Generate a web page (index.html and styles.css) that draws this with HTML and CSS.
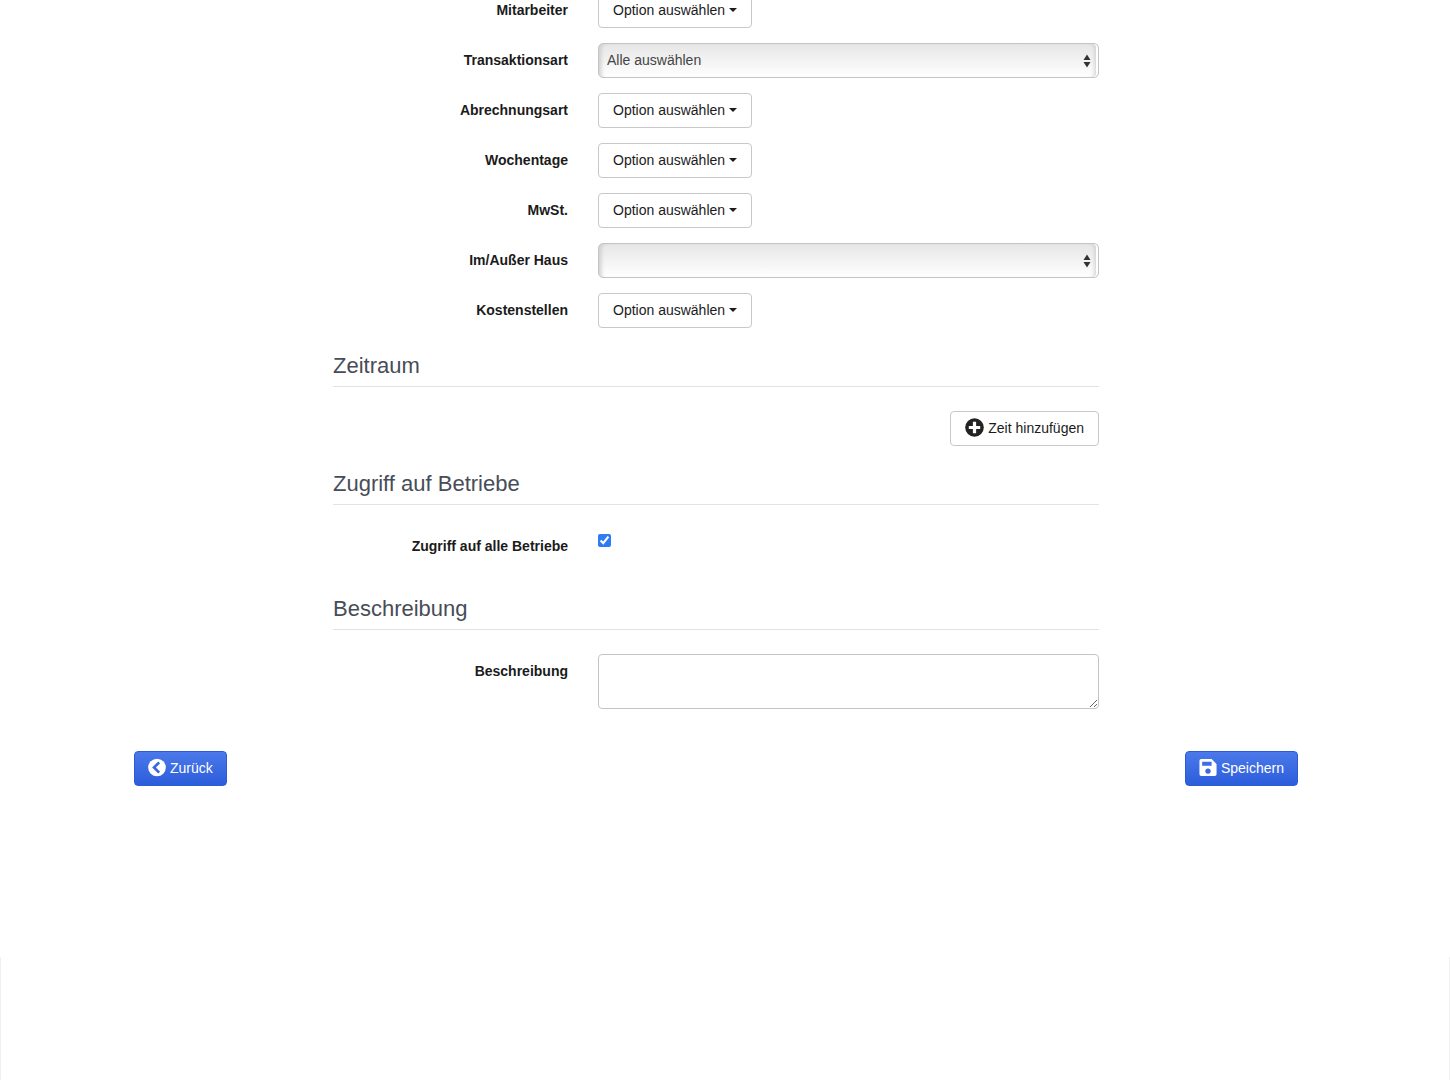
FILE: index.html
```html
<!DOCTYPE html>
<html lang="de">
<head>
  <meta charset="UTF-8">
  <title>Bericht bearbeiten</title>
  <meta name="viewport" content="width=device-width, initial-scale=1.0">
  <link rel="stylesheet" href="styles.css">
</head>
<body>
  <form class="page">
    <div class="form-body">
      <div class="row">
        <label for="employee">Mitarbeiter</label>
        <div><button type="button" class="btn" id="employee">Option auswählen <span class="caret"></span></button></div>
      </div>
      <div class="row">
        <label for="transaction">Transaktionsart</label>
        <select class="control" id="transaction">
          <option>Alle auswählen</option>
        </select>
      </div>
      <div class="row">
        <label for="billing">Abrechnungsart</label>
        <div><button type="button" class="btn" id="billing">Option auswählen <span class="caret"></span></button></div>
      </div>
      <div class="row">
        <label for="weekdays">Wochentage</label>
        <div><button type="button" class="btn" id="weekdays">Option auswählen <span class="caret"></span></button></div>
      </div>
      <div class="row">
        <label for="vat">MwSt.</label>
        <div><button type="button" class="btn" id="vat">Option auswählen <span class="caret"></span></button></div>
      </div>
      <div class="row">
        <label for="inhouse">Im/Außer Haus</label>
        <select class="control" id="inhouse">
          <option></option>
        </select>
      </div>
      <div class="row">
        <label for="costcenter">Kostenstellen</label>
        <div><button type="button" class="btn" id="costcenter">Option auswählen <span class="caret"></span></button></div>
      </div>

      <h2>Zeitraum</h2>
      <div class="row-right">
        <button type="button" class="btn">
          <svg class="icon" viewBox="0 0 20 20"><circle cx="10" cy="10" r="9.8" fill="#222"/><path d="M10 4v12M4 10h12" stroke="#fff" stroke-width="3.4"/></svg>
          Zeit hinzufügen
        </button>
      </div>

      <h2>Zugriff auf Betriebe</h2>
      <div class="row check-row">
        <label for="allsites">Zugriff auf alle Betriebe</label>
        <div><input type="checkbox" id="allsites" checked></div>
      </div>

      <h2>Beschreibung</h2>
      <div class="row">
        <label for="description">Beschreibung</label>
        <textarea class="control" id="description"></textarea>
      </div>
    </div>

    <div class="actions">
      <button type="button" class="btn btn-primary">
        <svg class="icon" viewBox="0 0 20 20"><circle cx="10" cy="10" r="9.8" fill="#fff"/><path d="M12.4 4.300 6.700 10l5.700 5.700" fill="none" stroke="#3a68e0" stroke-width="3"/></svg>
        Zurück
      </button>
      <button type="submit" class="btn btn-primary">
        <svg class="icon" viewBox="0 0 20 20"><path fill="#fff" fill-rule="evenodd" d="M2.500.5H14L19.500 6v11.500a2 2 0 0 1-2 2h-15a2 2 0 0 1-2-2v-15a2 2 0 0 1 2-2zM3.500 3.500v4.500h10.500V3.500zM10 11a3 3 0 1 0 0 6 3 3 0 0 0 0-6z"/></svg>
        Speichern
      </button>
    </div>
  </form>
  <div class="page-end"></div>
</body>
</html>
```
FILE: styles.css
```css
* {
  box-sizing: border-box;
}

body {
  display: flex;
  flex-direction: column;
  min-height: 100vh;
  margin: 0;
  background: #fff;
  color: #1b1b1b;
  font-family: "Liberation Sans", Arial, sans-serif;
  font-size: 14px;
  line-height: 18px;
}

.page {
  width: 100%;
  max-width: 1182px;
  margin: -7px auto 0;
  padding-right: 18px;
}

.form-body {
  max-width: 766px;
  margin: 0 auto;
}

.row {
  display: grid;
  grid-template-columns: 235px 1fr;
  column-gap: 30px;
  margin-bottom: 15px;
}

.row label {
  padding-top: 8px;
  text-align: right;
  font-weight: bold;
}

.row-right {
  display: flex;
  justify-content: flex-end;
  margin-bottom: 15px;
}

.check-row {
  min-height: 42px;
}

.check-row input {
  display: block;
  width: 13px;
  height: 13px;
  margin: 5px 0 0;
  accent-color: #2f7bf6;
}

h2 {
  margin: 0 0 24px;
  padding: 11px 0 8px;
  border-bottom: 1px solid #e3e3e3;
  color: #474d57;
  font-size: 22px;
  font-weight: normal;
  line-height: 24px;
}

.btn {
  display: inline-flex;
  align-items: center;
  gap: 4px;
  height: 35px;
  padding: 0 14px 2px;
  border: 1px solid #c8c8c8;
  border-radius: 4px;
  background: #fff;
  color: #1b1b1b;
  font: inherit;
  cursor: pointer;
}

.caret {
  border-top: 4px solid #1b1b1b;
  border-left: 4px solid transparent;
  border-right: 4px solid transparent;
}

.icon {
  width: 19px;
  height: 19px;
}

.btn-primary {
  padding: 0 13px 2px;
  border-color: #2d5bd6;
  background: linear-gradient(#4b79ea, #2c5ddb);
  color: #fff;
}

.btn-primary .icon {
  width: 18px;
}

.control {
  width: 100%;
  border: 1px solid #c4c4c4;
  border-radius: 4px;
  font: inherit;
}

select.control {
  appearance: none;
  height: 35px;
  padding: 0 24px 2px 8px;
  border-radius: 5px;
  background: url("data:image/svg+xml,%3Csvg xmlns='http://www.w3.org/2000/svg' width='8' height='14'%3E%3Cpath d='M4 .5 7.500 6h-7zM.5 8h7L4 13.500z' fill='%23333'/%3E%3C/svg%3E") no-repeat right 7px center,
    linear-gradient(#e6e6e6, #fff);
  box-shadow: inset -2px 0 0 #fff, inset -6px 0 4px -3px #ccc, inset 5px 1px 4px -3px #ccc;
  color: #444;
}

textarea.control {
  display: block;
  height: 55px;
  padding: 8px;
  background: #fff;
  resize: vertical;
}

.actions {
  display: flex;
  justify-content: space-between;
  margin-top: 42px;
}

.page-end {
  flex: 1;
  margin-top: 171px;
  border: 1px solid #f0f0f0;
  border-width: 0 1px;
}
```
